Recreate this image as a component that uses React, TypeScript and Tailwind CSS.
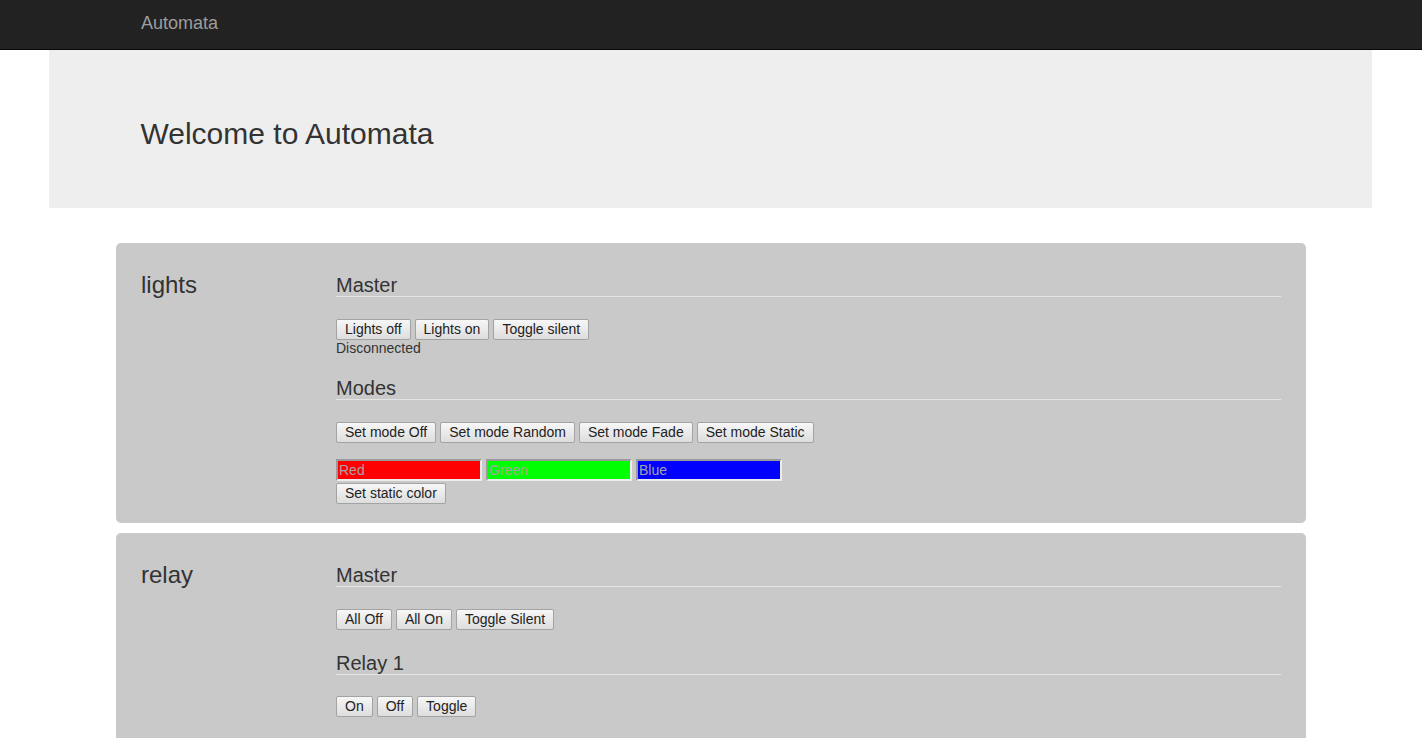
const btn =
  "h-[21px] px-[8px] border border-[#a3a3a3] rounded-[2px] bg-gradient-to-b from-[#f7f7f7] to-[#dddddd] text-[14px] leading-[17px] text-[#222] whitespace-nowrap";

function Btn({ label }: { label: string }) {
  return (
    <button type="button" className={btn}>
      {label}
    </button>
  );
}

function SectionTitle({ title }: { title: string }) {
  return (
    <h4 className="text-[20px] leading-[22px] text-[#333] border-b border-[#e4e4e4]">
      {title}
    </h4>
  );
}

function ButtonRow({ labels }: { labels: string[] }) {
  return (
    <div className="flex gap-[4px]">
      {labels.map((l) => (
        <Btn key={l} label={l} />
      ))}
    </div>
  );
}

function ColorInput({ placeholder, bg }: { placeholder: string; bg: string }) {
  return (
    <input
      type="text"
      placeholder={placeholder}
      className={`w-[146px] h-[22px] px-[1px] border-2 border-t-[#9a9a9a] border-l-[#9a9a9a] border-r-[#ececec] border-b-[#ececec] text-[14px] text-[#999] placeholder:text-[#a4a4a4] outline-none ${bg}`}
    />
  );
}

function Panel({ name, children }: { name: string; children: React.ReactNode }) {
  return (
    <div className="bg-[#c9c9c9] rounded-[5px] px-[25px] pt-[29px] pb-[18px] grid grid-cols-[195px_1fr]">
      <h3 className="text-[24px] leading-[26px] text-[#333]">{name}</h3>
      <div className="pt-[2px]">{children}</div>
    </div>
  );
}

export default function App() {
  return (
    <div className="min-h-screen bg-white font-['Liberation_Sans',Arial,sans-serif] text-[#333]">
      {/* navbar */}
      <div className="h-[50px] bg-[#222] border-b border-[#080808]">
        <div className="w-[1140px] mx-auto">
          <span className="block pt-[13px] text-[18px] leading-[20px] text-[#9d9d9d]">Automata</span>
        </div>
      </div>

      {/* jumbotron */}
      <div className="ml-[49px] mr-[50px] bg-[#eeeeee] pt-[67px] pb-[58px]">
        <div className="w-[1140px] mx-auto">
          <h1 className="text-[30px] leading-[33px] text-[#333]">Welcome to Automata</h1>
        </div>
      </div>

      <div className="w-[1190px] mx-auto mt-[35px] flex flex-col gap-[10px] pb-[40px]">
        <Panel name="lights">
          <SectionTitle title="Master" />
          <div className="mt-[22px]">
            <ButtonRow labels={["Lights off", "Lights on", "Toggle silent"]} />
          </div>
          <p className="text-[14px] leading-[16px] text-[#333]">Disconnected</p>

          <div className="mt-[21px]">
            <SectionTitle title="Modes" />
          </div>
          <div className="mt-[22px]">
            <ButtonRow labels={["Set mode Off", "Set mode Random", "Set mode Fade", "Set mode Static"]} />
          </div>
          <div className="mt-[16px] flex gap-[4px]">
            <ColorInput placeholder="Red" bg="bg-[#ff0000]" />
            <ColorInput placeholder="Green" bg="bg-[#00ff00]" />
            <ColorInput placeholder="Blue" bg="bg-[#0000ff]" />
          </div>
          <Btn label="Set static color" />
        </Panel>

        <Panel name="relay">
          <SectionTitle title="Master" />
          <div className="mt-[22px]">
            <ButtonRow labels={["All Off", "All On", "Toggle Silent"]} />
          </div>
          <div className="mt-[22px]">
            <SectionTitle title="Relay 1" />
          </div>
          <div className="mt-[21px] pb-[60px]">
            <ButtonRow labels={["On", "Off", "Toggle"]} />
          </div>
        </Panel>
      </div>
    </div>
  );
}
